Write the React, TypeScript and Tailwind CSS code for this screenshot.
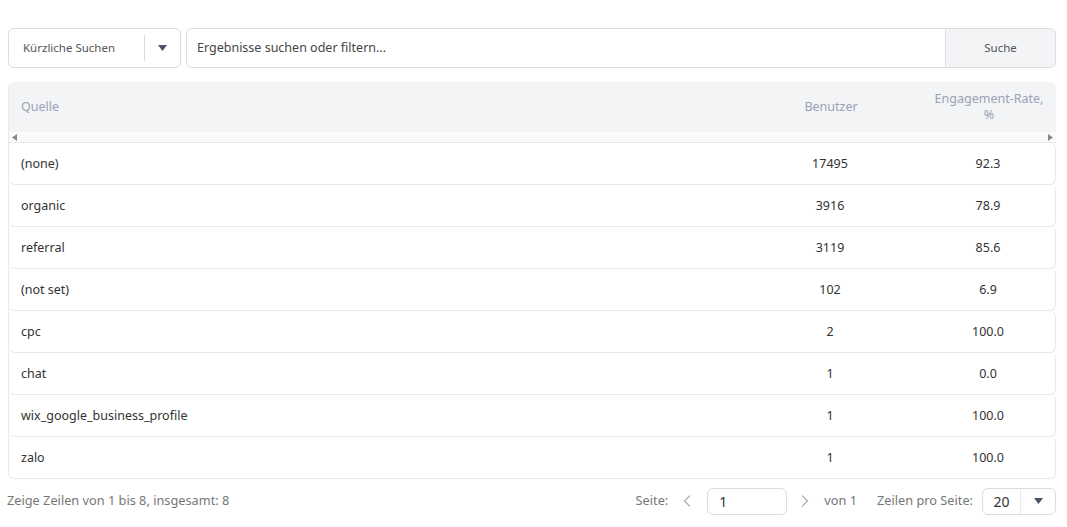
import React from 'react';
import { ChevronLeft, ChevronRight } from 'lucide-react';

const rows = [
  { source: '(none)', users: '17495', rate: '92.3' },
  { source: 'organic', users: '3916', rate: '78.9' },
  { source: 'referral', users: '3119', rate: '85.6' },
  { source: '(not set)', users: '102', rate: '6.9' },
  { source: 'cpc', users: '2', rate: '100.0' },
  { source: 'chat', users: '1', rate: '0.0' },
  { source: 'wix_google_business_profile', users: '1', rate: '100.0' },
  { source: 'zalo', users: '1', rate: '100.0' },
];

function Caret() {
  return (
    <svg width="9" height="6" viewBox="0 0 9 6" className="fill-[#4b5368]">
      <path d="M0 0h9L4.5 6z" />
    </svg>
  );
}

export default function App() {
  return (
    <div className="min-h-screen w-full bg-white pl-2 pr-[11px] pt-7 text-[12.5px] text-[#333] font-['Noto_Sans','Lato',sans-serif]">
      {/* Search bar */}
      <div className="flex h-10 gap-[5px]">
        <div className="flex w-[173px] items-center rounded-md border border-[#d9dce3] bg-white">
          <span className="flex-1 pl-[14px] text-[11.5px] text-[#555]">Kürzliche Suchen</span>
          <div className="h-[26px] w-px bg-[#d9dce3]" />
          <div className="flex w-[35px] items-center justify-center">
            <Caret />
          </div>
        </div>
        <div className="flex flex-1 overflow-hidden rounded-md border border-[#d9dce3]">
          <input
            className="flex-1 px-[10px] text-[12.5px] text-[#333] outline-none placeholder:text-[#444]"
            placeholder="Ergebnisse suchen oder filtern..."
          />
          <button className="w-[110px] border-l border-[#d9dce3] bg-[#f3f4f6] text-[11.5px] text-[#555]">Suche</button>
        </div>
      </div>

      {/* Table */}
      <div className="mt-[14px] rounded-md border-l border-[#e6e9ef]">
        <div className="flex h-[50px] items-center rounded-t-md bg-[#f3f4f6] text-[#9aa2b6]">
          <div className="flex-1 pl-3">Quelle</div>
          <div className="w-[142px] text-center">Benutzer</div>
          <div className="ml-5 w-[134px] text-center leading-4">
            Engagement-Rate,
            <br />%
          </div>
        </div>
        <div className="flex h-[11px] items-center justify-between border-b border-[#e6e9ef] bg-[#fafafa] px-[3px]">
          <svg width="5" height="7" viewBox="0 0 5 7" className="fill-[#8a8a8a]">
            <path d="M5 0v7L0 3.5z" />
          </svg>
          <svg width="5" height="7" viewBox="0 0 5 7" className="fill-[#8a8a8a]">
            <path d="M0 0v7l5-3.5z" />
          </svg>
        </div>
        {rows.map((r) => (
          <div
            key={r.source}
            className="flex h-[42px] items-center rounded-md border-r border-b border-[#e6e9ef] bg-white pt-px"
          >
            <div className="flex-1 pl-3">{r.source}</div>
            <div className="w-[142px] text-center">{r.users}</div>
            <div className="ml-5 w-[134px] text-center">{r.rate}</div>
          </div>
        ))}
      </div>

      {/* Footer */}
      <div className="mt-2 flex h-[28px] items-center text-[12.75px] text-[#777]">
        <span className="-ml-px flex-1">Zeige Zeilen von 1 bis 8, insgesamt: 8</span>
        <span>Seite:</span>
        <ChevronLeft className="ml-[9px] h-5 w-5 text-[#aab0bd]" strokeWidth={1.5} />
        <div className="ml-[10px] flex h-[27px] w-[80px] items-center rounded-md border border-[#d9dce3] pl-[11px] text-[14px] text-[#333]">
          1
        </div>
        <ChevronRight className="ml-[8px] h-5 w-5 text-[#aab0bd]" strokeWidth={1.5} />
        <span className="ml-[9px]">von 1</span>
        <span className="ml-5">Zeilen pro Seite:</span>
        <div className="ml-[9px] flex h-[27px] w-[74px] items-center rounded-md border border-[#d9dce3]">
          <span className="w-[37px] text-center text-[14px] text-[#333]">20</span>
          <div className="h-[27px] w-px bg-[#e6e9ef]" />
          <div className="flex flex-1 items-center justify-center">
            <Caret />
          </div>
        </div>
      </div>
    </div>
  );
}
